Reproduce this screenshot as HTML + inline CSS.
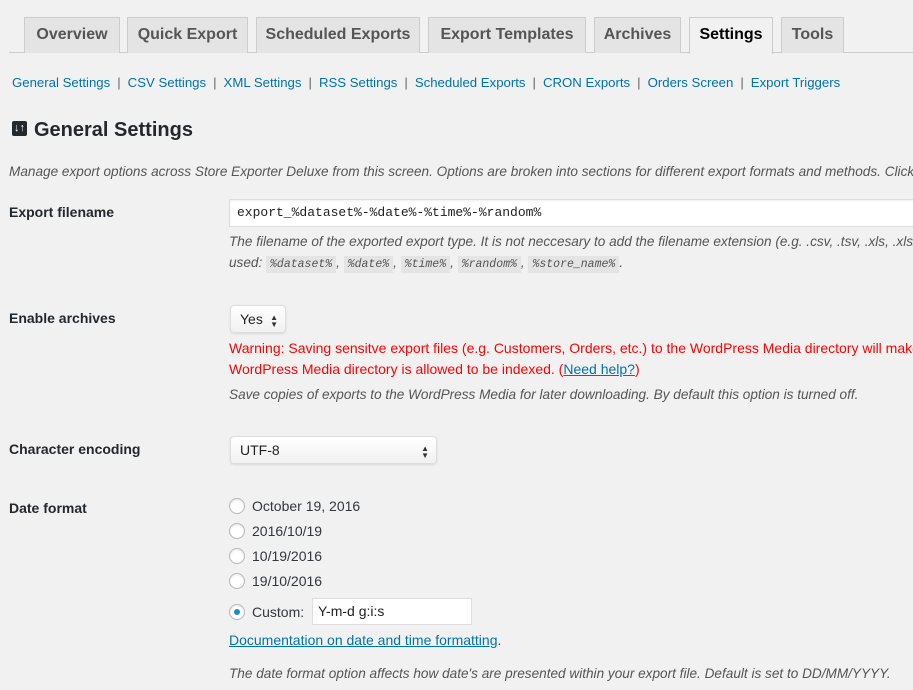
<!DOCTYPE html>
<html><head><meta charset="utf-8">
<style>
*{box-sizing:border-box;margin:0;padding:0}
body{width:913px;height:690px;overflow:hidden;background:#f1f1f1;font-family:"Liberation Sans",sans-serif;color:#444;position:relative}
.a{position:absolute;white-space:nowrap}
.tab{position:absolute;top:17px;height:36px;background:#e4e4e4;border:1px solid #ccc;border-bottom:none;font-size:16px;font-weight:bold;color:#555;text-align:center;line-height:34px}
.tab.on{background:#f1f1f1;color:#000;height:37px}
.line{position:absolute;left:9px;right:0;top:52px;border-top:1px solid #ccc}
.sub{top:75px;left:12px;font-size:13.2px;color:#0073aa}
.sub span{color:#666;margin:0 7px}
.lbl{left:9px;font-size:14px;font-weight:bold;color:#23282d}
.it{font-style:italic;font-size:13.6px;color:#555}
code{font-family:"Liberation Mono",monospace;font-size:11.5px;background:#e4e4e4;padding:2px 4px;font-style:italic;color:#555}
.radio{position:absolute;left:229px;width:16px;height:16px;border:1px solid #b4b9be;border-radius:50%;background:#fff;box-shadow:inset 0 1px 2px rgba(0,0,0,.1)}
.rl{left:252px;font-size:14px;color:#32373c}
.sel{position:absolute;border:1px solid #ddd;border-radius:4px;background:linear-gradient(#fff,#f1f1f1);box-shadow:0 1px 2px rgba(0,0,0,.1);font-size:14px;color:#222;padding-left:9px}
.arr{position:absolute;right:7px;top:8px;font-size:8px;line-height:7px;color:#333}
</style></head><body>
<div class="line"></div>
<div class="tab" style="left:24px;width:96px">Overview</div>
<div class="tab" style="left:127px;width:121px">Quick Export</div>
<div class="tab" style="left:256px;width:164px">Scheduled Exports</div>
<div class="tab" style="left:428px;width:158px">Export Templates</div>
<div class="tab" style="left:594px;width:87px">Archives</div>
<div class="tab on" style="left:689px;width:84px">Settings</div>
<div class="tab" style="left:781px;width:63px">Tools</div>

<div class="a sub">General Settings<span>|</span>CSV Settings<span>|</span>XML Settings<span>|</span>RSS Settings<span>|</span>Scheduled Exports<span>|</span>CRON Exports<span>|</span>Orders Screen<span>|</span>Export Triggers</div>

<div class="a" style="left:12px;top:121px;width:15px;height:15px;background:#23282d;border-radius:2px;color:#fff;font-size:11px;font-weight:bold;text-align:center;line-height:15px">↓↑</div>
<div class="a" style="left:34px;top:119px;font-size:20px;font-weight:bold;color:#23282d">General Settings</div>

<div class="a it" style="left:9px;top:164px">Manage export options across Store Exporter Deluxe from this screen. Options are broken into sections for different export formats and methods. Click</div>

<div class="a lbl" style="top:204px">Export filename</div>
<div class="a" style="left:229px;top:199px;width:700px;height:28px;background:#fff;border:1px solid #ddd;box-shadow:inset 0 1px 2px rgba(0,0,0,.07);font-family:'Liberation Mono',monospace;font-size:13px;color:#222;padding:5px 7px">export_%dataset%-%date%-%time%-%random%</div>
<div class="a it" style="left:229px;top:234px">The filename of the exported export type. It is not neccesary to add the filename extension (e.g. .csv, .tsv, .xls, .xlsx) as</div>
<div class="a it" style="left:229px;top:255px">used: <code>%dataset%</code>, <code>%date%</code>, <code>%time%</code>, <code>%random%</code>, <code>%store_name%</code>.</div>

<div class="a lbl" style="top:310px">Enable archives</div>
<div class="sel" style="left:230px;top:305px;width:56px;height:28px;line-height:26px">Yes<div class="arr">▲<br>▼</div></div>
<div class="a" style="left:229px;top:340px;font-size:14px;color:#f00">Warning: Saving sensitve export files (e.g. Customers, Orders, etc.) to the WordPress Media directory will make</div>
<div class="a" style="left:229px;top:361px;font-size:14px;color:#f00">WordPress Media directory is allowed to be indexed. (<span style="color:#0073aa;text-decoration:underline">Need help?</span>)</div>
<div class="a it" style="left:229px;top:387px">Save copies of exports to the WordPress Media for later downloading. By default this option is turned off.</div>

<div class="a lbl" style="top:441px">Character encoding</div>
<div class="sel" style="left:230px;top:436px;width:207px;height:28px;line-height:26px">UTF-8<div class="arr">▲<br>▼</div></div>

<div class="a lbl" style="top:500px">Date format</div>
<div class="radio" style="top:498px"></div><div class="a rl" style="top:498px">October 19, 2016</div>
<div class="radio" style="top:523px"></div><div class="a rl" style="top:523px">2016/10/19</div>
<div class="radio" style="top:548px"></div><div class="a rl" style="top:548px">10/19/2016</div>
<div class="radio" style="top:573px"></div><div class="a rl" style="top:573px">19/10/2016</div>
<div class="radio" style="top:604px"><div style="position:absolute;left:4px;top:4px;width:6px;height:6px;border-radius:50%;background:#1e8cbe"></div></div>
<div class="a rl" style="top:604px">Custom:</div>
<div class="a" style="left:312px;top:598px;width:160px;height:27px;background:#fff;border:1px solid #ddd;font-size:14px;color:#222;padding:4px 5px">Y-m-d g:i:s</div>
<div class="a" style="left:229px;top:632px;font-size:14px;color:#0073aa"><span style="text-decoration:underline">Documentation on date and time formatting</span><span style="color:#444">.</span></div>
<div class="a it" style="left:229px;top:666px">The date format option affects how date's are presented within your export file. Default is set to DD/MM/YYYY.</div>
</body></html>
